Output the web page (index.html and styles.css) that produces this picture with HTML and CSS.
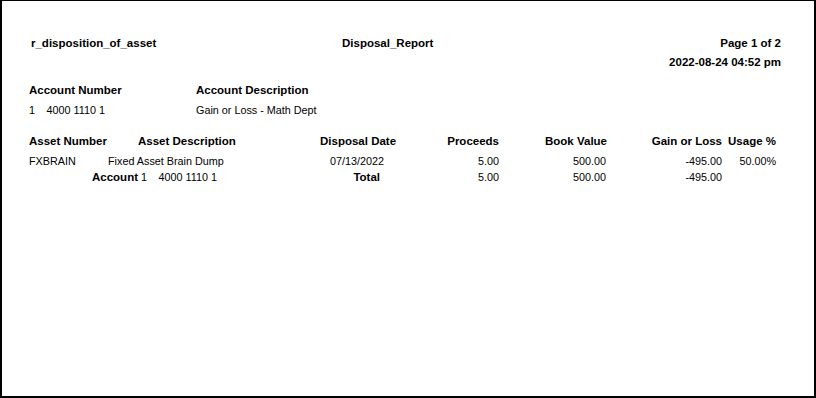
FILE: index.html
```html
<!DOCTYPE html>
<html>
<head>
<meta charset="utf-8">
<link rel="stylesheet" href="styles.css">
</head>
<body>
<div class="page">
  <div class="report-head">
    <div class="b">r_disposition_of_asset</div>
    <div class="b">Disposal_Report</div>
    <div class="b r">Page 1 of 2</div>
    <div></div>
    <div></div>
    <div class="b r">2022-08-24 04:52 pm</div>
  </div>

  <div class="acct">
    <div class="b acct-label">Account Number</div>
    <div class="b acct-label">Account Description</div>
    <div class="acct-val"><span class="num1">1</span>4000 1110 1</div>
    <div class="acct-val">Gain or Loss - Math Dept</div>
  </div>

  <div class="assets head-row">
    <div class="b span2">Asset Number</div>
    <div class="b">Asset Description</div>
    <div class="b r">Disposal Date</div>
    <div class="b r">Proceeds</div>
    <div class="b r">Book Value</div>
    <div class="b r">Gain or Loss</div>
    <div class="b r">Usage %</div>
  </div>
  <div class="assets data-row">
    <div>FXBRAIN</div>
    <div class="span2">Fixed Asset Brain Dump</div>
    <div class="c">07/13/2022</div>
    <div class="r">5.00</div>
    <div class="r pr1">500.00</div>
    <div class="r">-495.00</div>
    <div class="r">50.00%</div>
  </div>
  <div class="assets total-row">
    <div class="span3 acct-total"><span class="b">Account</span> <span class="num1">1</span>4000 1110 1</div>
    <div class="b r total">Total</div>
    <div class="r">5.00</div>
    <div class="r pr1">500.00</div>
    <div class="r">-495.00</div>
    <div></div>
  </div>
</div>
</body>
</html>
```

FILE: styles.css
```css
html, body {
  margin: 0;
  padding: 0;
  background: #fff;
}

body {
  font-family: "Liberation Sans", Arial, sans-serif;
  font-size: 10.8px;
  color: #000;
}

.page {
  box-sizing: border-box;
  width: 816px;
  height: 398px;
  border-style: solid;
  border-color: #000;
  border-width: 1px 2px 2px 2px;
  padding: 33.4px 33px 0 27px;
  background: #fff;
}

.b {
  font-weight: bold;
  font-size: 11.5px;
}

.r {
  text-align: right;
}

.c {
  text-align: center;
}

.report-head {
  display: grid;
  grid-template-columns: 311px 1fr auto;
  padding-left: 2px;
  line-height: 18.7px;
}

.acct {
  display: grid;
  grid-template-columns: 167px 1fr;
  margin-top: 8.6px;
}

.acct-label {
  line-height: 20px;
}

.acct-val {
  line-height: 20px;
}

.num1 {
  display: inline-block;
  width: 17.5px;
}

.assets {
  display: grid;
  grid-template-columns: 79px 30px 182px 74px 105px 108px 115px 54px;
  width: 747px;
  white-space: nowrap;
}

.span2 {
  grid-column: span 2;
}

.span3 {
  grid-column: span 3;
}

.head-row {
  margin-top: 11.7px;
  line-height: 18px;
}

.data-row {
  margin-top: 3px;
  line-height: 16px;
}

.total-row {
  line-height: 16px;
}

.acct-total {
  padding-left: 63px;
}

.total {
  padding-right: 14px;
}

.pr1 {
  padding-right: 1px;
}
```
